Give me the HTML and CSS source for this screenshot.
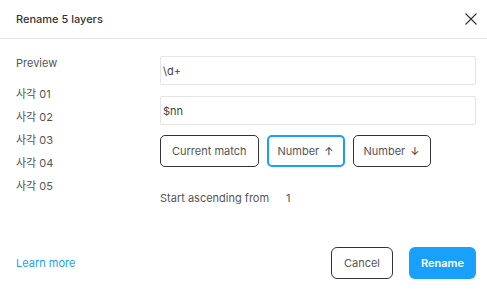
FILE: index.html
```html
<!DOCTYPE html>
<html lang="en">
<head>
    <meta charset="UTF-8">
    <title>Rename 5 layers</title>
    <link rel="stylesheet" href="styles.css">
</head>
<body>
    <div class="dialog">
        <div class="header">
            <span class="title">Rename 5 layers</span>
            <button class="close" aria-label="Close">
                <svg width="12" height="12" viewBox="0 0 12 12"><path d="M0.5 0.5L11.5 11.5M11.5 0.5L0.5 11.5" stroke="#333" stroke-width="1.1" fill="none"/></svg>
            </button>
        </div>
        <div class="content">
            <div class="preview">
                <div class="preview-label">Preview</div>
                <ul class="preview-list">
                    <li>사각 01</li>
                    <li>사각 02</li>
                    <li>사각 03</li>
                    <li>사각 04</li>
                    <li>사각 05</li>
                </ul>
            </div>
            <div class="form">
                <input class="field" type="text" value="\d+">
                <input class="field" type="text" value="$nn">
                <div class="options">
                    <button class="opt">Current match</button>
                    <button class="opt active">Number <span class="arrow">↑</span></button>
                    <button class="opt">Number <span class="arrow">↓</span></button>
                </div>
                <div class="start">
                    <span>Start ascending from</span>
                    <span class="start-value">1</span>
                </div>
            </div>
        </div>
        <div class="footer">
            <a class="learn" href="#">Learn more</a>
            <div class="actions">
                <button class="btn cancel">Cancel</button>
                <button class="btn primary">Rename</button>
            </div>
        </div>
    </div>
</body>
</html>
```
FILE: styles.css
```css
body {
    margin: 0;
    font-family: Inter, "Noto Sans CJK KR", sans-serif;
    font-size: 11px;
    color: #333;
    background: #fff;
}
button, input {
    font-family: inherit;
    font-size: 11px;
}
.dialog {
    display: flex;
    flex-direction: column;
    height: 100vh;
}
.header {
    height: 38px;
    display: flex;
    align-items: center;
    justify-content: space-between;
    padding: 0 9px 0 16px;
    border-bottom: 1px solid #e5e5e5;
}
.title {
    font-weight: 500;
    color: #333;
}
.close {
    background: none;
    border: none;
    padding: 0;
    width: 14px;
    height: 14px;
    display: flex;
    align-items: center;
    justify-content: center;
}
.content {
    flex: 1;
    display: flex;
    padding: 17px 11px 0 16px;
}
.preview {
    width: 144px;
    color: #555;
}
.preview-label {
    line-height: 14px;
    margin-bottom: 13px;
}
.preview-list {
    list-style: none;
    margin: 0;
    padding: 0;
}
.preview-list li {
    line-height: 23px;
    font-size: 11px;
}
.form {
    flex: 1;
    display: flex;
    flex-direction: column;
}
.field {
    height: 29px;
    box-sizing: border-box;
    border: 1px solid #e5e5e5;
    border-radius: 2px;
    padding: 0 2px;
    color: #444;
    margin-bottom: 11px;
    outline: none;
}
.options {
    display: flex;
    gap: 8px;
    margin-top: -1px;
}
.opt {
    height: 32px;
    box-sizing: border-box;
    padding: 0 10px;
    border: 1px solid #333;
    border-radius: 5px;
    background: #fff;
    color: #555;
    white-space: nowrap;
}
.opt:first-child {
    padding: 0 11px;
}
.opt.active {
    border: 2px solid #18a0fb;
    padding: 0 9px;
}
.arrow {
    margin-left: 2px;
    color: #333;
}
.start {
    display: flex;
    gap: 17px;
    margin-top: 24px;
    line-height: 14px;
    color: #555;
}
.footer {
    display: flex;
    align-items: center;
    justify-content: space-between;
    padding: 0 11px 16px 16px;
}
.learn {
    color: #18a0fb;
    text-decoration: none;
}
.actions {
    display: flex;
    gap: 16px;
}
.btn {
    height: 32px;
    box-sizing: border-box;
    border-radius: 6px;
    padding: 0 12px;
}
.cancel {
    border: 1px solid #333;
    background: #fff;
    color: #555;
}
.primary {
    border: none;
    background: #18a0fb;
    color: #fff;
    font-weight: 600;
}
```
